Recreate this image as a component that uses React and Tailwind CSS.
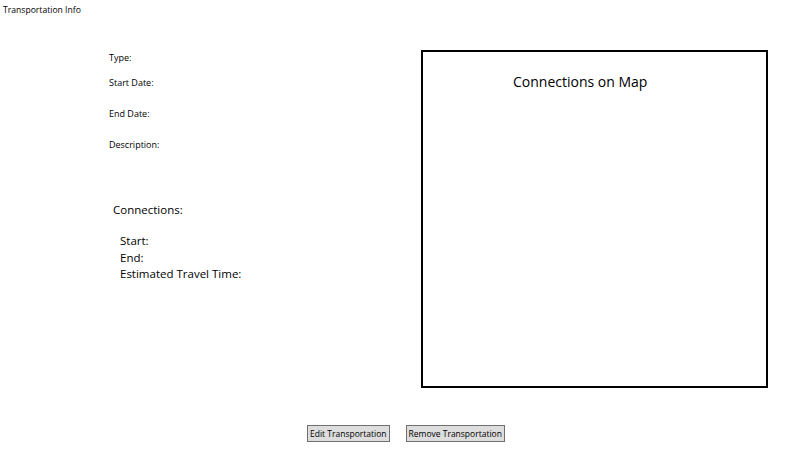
import React from "react";

const Field = ({ label, className }) => (
  <div className={`text-[9px] leading-[12px] ${className}`}>{label}</div>
);

export default function App() {
  return (
    <div className="w-[800px] h-[462px] bg-white text-black flex flex-col font-['Open_Sans',sans-serif]">
      <div className="pl-[3px] pt-[4px] text-[8.6px] leading-[12px]">Transportation Info</div>

      <div className="flex mt-[34px]">
        {/* left side */}
        <div className="w-[421px] shrink-0 pl-[109px] flex flex-col">
          <Field label="Type:" className="mt-[2px]" />
          <Field label="Start Date:" className="mt-[13px]" />
          <Field label="End Date:" className="mt-[19px]" />
          <Field label="Description:" className="mt-[19px]" />

          <div className="ml-[4px] mt-[51px] text-[11.5px] leading-[16px]">Connections:</div>
          <div className="ml-[11px] mt-[15px] text-[11.5px] leading-[16.5px]">
            <div>Start:</div>
            <div>End:</div>
            <div>Estimated Travel Time:</div>
          </div>
        </div>

        {/* map */}
        <div className="w-[347px] h-[338px] shrink-0 border-2 border-black flex">
          <div className="ml-[90px] mt-[20px] text-[14px] leading-[20px]">Connections on Map</div>
        </div>
      </div>

      <div className="flex mt-[37px] pl-[307px] gap-[16px]">
        <button className="h-[17px] px-[2px] bg-[#dddddd] border border-[#707070] text-[8.5px] leading-[14px]">
          Edit Transportation
        </button>
        <button className="h-[17px] px-[2px] bg-[#dddddd] border border-[#707070] text-[8.5px] leading-[14px]">
          Remove Transportation
        </button>
      </div>
    </div>
  );
}
